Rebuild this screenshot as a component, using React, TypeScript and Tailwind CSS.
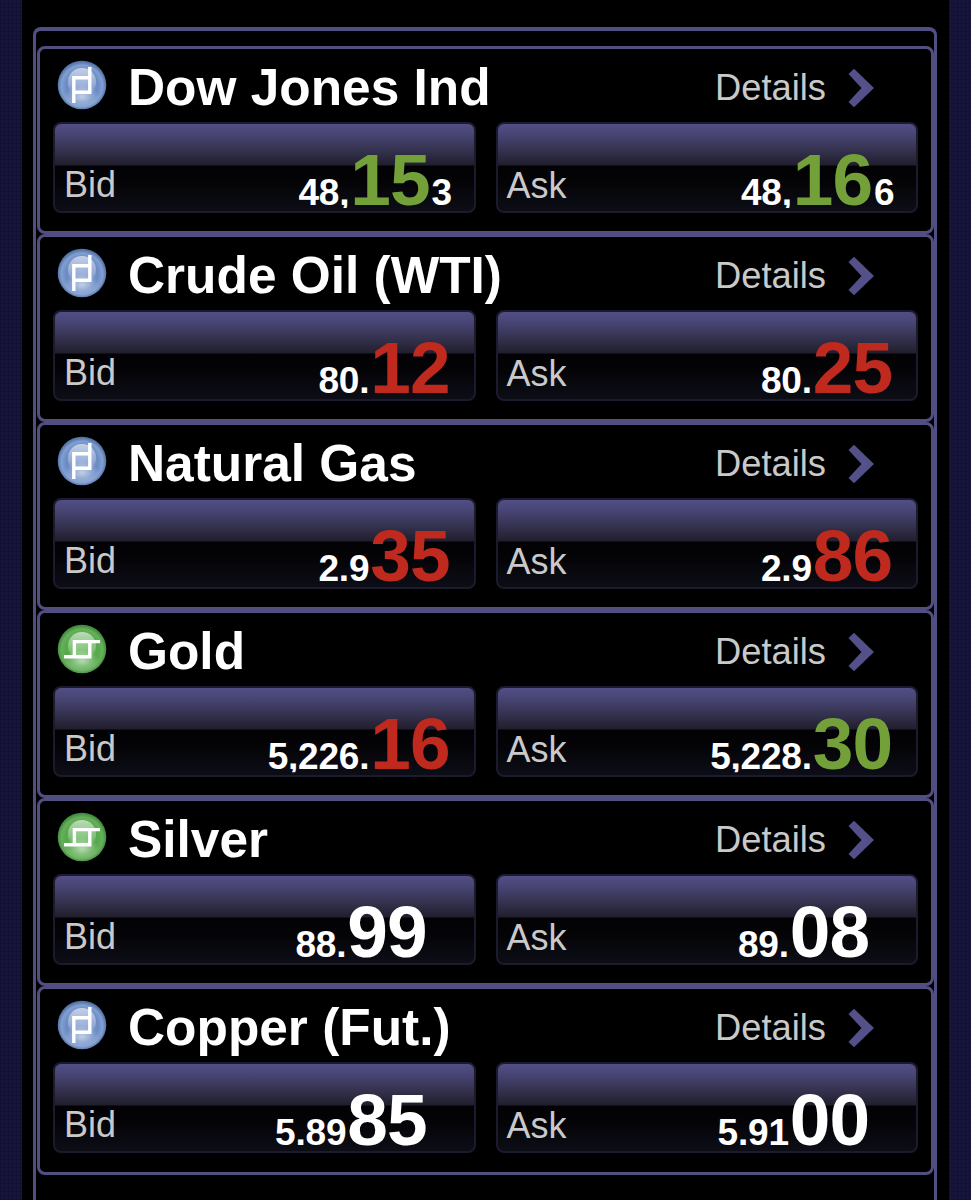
import clsx from 'clsx';

type Tone = 'up' | 'down' | 'flat';

interface Price {
  lead: string;
  big: string;
  tail?: string;
  tone: Tone;
}

interface Quote {
  name: string;
  kind: 'blue' | 'green';
  bid: Price;
  ask: Price;
}

const quotes: Quote[] = [
  {
    name: 'Dow Jones Ind',
    kind: 'blue',
    bid: { lead: '48,', big: '15', tail: '3', tone: 'up' },
    ask: { lead: '48,', big: '16', tail: '6', tone: 'up' },
  },
  {
    name: 'Crude Oil (WTI)',
    kind: 'blue',
    bid: { lead: '80.', big: '12', tone: 'down' },
    ask: { lead: '80.', big: '25', tone: 'down' },
  },
  {
    name: 'Natural Gas',
    kind: 'blue',
    bid: { lead: '2.9', big: '35', tone: 'down' },
    ask: { lead: '2.9', big: '86', tone: 'down' },
  },
  {
    name: 'Gold',
    kind: 'green',
    bid: { lead: '5,226.', big: '16', tone: 'down' },
    ask: { lead: '5,228.', big: '30', tone: 'up' },
  },
  {
    name: 'Silver',
    kind: 'green',
    bid: { lead: '88.', big: '99', tone: 'flat' },
    ask: { lead: '89.', big: '08', tone: 'flat' },
  },
  {
    name: 'Copper (Fut.)',
    kind: 'blue',
    bid: { lead: '5.89', big: '85', tone: 'flat' },
    ask: { lead: '5.91', big: '00', tone: 'flat' },
  },
];

const toneClass: Record<Tone, string> = {
  up: 'text-[#74a03a]',
  down: 'text-[#c0291d]',
  flat: 'text-white',
};

const Badge = ({ kind }: { kind: Quote['kind'] }) => {
  const blue = kind === 'blue';
  return (
    <svg width="50" height="50" viewBox="0 0 50 50" className="shrink-0">
      <defs>
        <radialGradient id={`ball-${kind}`} cx="0.5" cy="0.52" r="0.5">
          <stop offset="0" stopColor={blue ? '#839fd3' : '#6bb95f'} />
          <stop offset="0.65" stopColor={blue ? '#6b8bc4' : '#55a84b'} />
          <stop offset="0.85" stopColor={blue ? '#819fd0' : '#66b05b'} />
          <stop offset="1" stopColor={blue ? '#5473a6' : '#438c3e'} />
        </radialGradient>
        <linearGradient id={`shine-${kind}`} x1="0" y1="0" x2="0" y2="1">
          <stop offset="0" stopColor="#fff" stopOpacity="0.6" />
          <stop offset="1" stopColor="#fff" stopOpacity="0" />
        </linearGradient>
        <radialGradient id={`glow-${kind}`}>
          <stop offset="0" stopColor="#fff" stopOpacity="0.55" />
          <stop offset="1" stopColor="#fff" stopOpacity="0" />
        </radialGradient>
      </defs>
      <circle cx="25" cy="25" r="24.3" fill={`url(#ball-${kind})`} />
      <ellipse cx="25" cy="37" rx="17" ry="11" fill={`url(#glow-${kind})`} />
      <circle cx="25" cy="22" r="14" fill={`url(#shine-${kind})`} />
      <path
        d={blue ? 'M16.8 43V17.8H32.8M16.8 32.2H32.8V7' : 'M7 32.8H32.8V17.6M17.4 32.8V17.6H43'}
        fill="none"
        stroke="#fff"
        strokeWidth="3.4"
      />
    </svg>
  );
};

const Chevron = () => (
  <svg width="28" height="40" viewBox="0 0 28 40" className="shrink-0">
    <path d="M1.5 6L7 0.8L27 20L7 39.2L1.5 34L14.5 20Z" fill="#53508a" />
  </svg>
);

const PricePanel = ({ label, price }: { label: string; price: Price }) => (
  <div className="flex h-[91px] flex-1 justify-between rounded-lg border-2 border-[#1c1a2d] bg-[linear-gradient(180deg,#514e84_0px,#484576_10px,#35324f_26px,#211e2e_41px,#020204_42px,#040407_58px,#0d0d17_87px)]">
    <span
      className={clsx(
        'pl-[9px] text-4xl leading-[40px] text-[#c9c9c9]',
        label === 'Bid' ? 'pt-[41px]' : 'pt-[42px]',
      )}
    >
      {label}
    </span>
    <div
      className={clsx(
        'flex h-[87px] items-baseline pt-[16px] font-bold text-white',
        price.tail ? 'pr-[20px]' : price.tone === 'flat' ? 'pr-[47px]' : 'pr-[24px]',
      )}
    >
      {/* only the top of a comma's hook shows below the baseline */}
      <span
        className={clsx(
          'text-[37px] leading-[42px] tracking-[-0.2px]',
          price.lead.includes(',') && '[clip-path:inset(0_0_6px_0)]',
        )}
      >
        {price.lead}
      </span>
      <span
        className={clsx(
          'pl-px text-[73px] leading-[80px] tracking-[-1px]',
          toneClass[price.tone],
        )}
      >
        {price.big}
      </span>
      {price.tail && <span className="w-[24px] pl-[2px] text-[37px] leading-[42px]">{price.tail}</span>}
    </div>
  </div>
);

const QuoteRow = ({ quote }: { quote: Quote }) => (
  <section className="h-[188.1px] rounded-lg border-[3px] border-[#514e82] bg-black px-[13px]">
    <div className="flex h-[73px] items-center">
      <div className="pb-[2px] pl-[4px]">
        <Badge kind={quote.kind} />
      </div>
      <h2 className="flex-1 pt-[2px] pl-[21px] text-[51.4px] leading-[58px] font-bold whitespace-nowrap text-white">
        {quote.name}
      </h2>
      <span className="pt-[4px] text-[36.3px] leading-[42px] text-[#c9c9c9]">Details</span>
      <div className="pt-[4px] pr-[43px] pl-[21px]">
        <Chevron />
      </div>
    </div>
    <div className="flex gap-5">
      <PricePanel label="Bid" price={quote.bid} />
      <PricePanel label="Ask" price={quote.ask} />
    </div>
  </section>
);

const Edge = () => (
  <div className="w-[22px] shrink-0 bg-[#18153a] bg-[repeating-linear-gradient(0deg,#0c0b2a66_0px,#0c0b2a66_1px,transparent_1px,transparent_4px),repeating-linear-gradient(90deg,#0c0b2a66_0px,#0c0b2a66_1px,transparent_1px,transparent_4px)]" />
);

const App = () => (
  <div className="flex h-[1200px] w-[971px] overflow-hidden bg-black font-['Liberation_Sans',Arial,sans-serif]">
    <Edge />
    <main className="flex-1 pt-[27px] pr-[12px] pl-[11px]">
      <div className="h-[1190px] rounded-t-lg border-x-[3px] border-t-[4px] border-[#514e82] pt-[15px] pl-px">
        {quotes.map((quote) => (
          <QuoteRow key={quote.name} quote={quote} />
        ))}
      </div>
    </main>
    <Edge />
  </div>
);

export default App;
